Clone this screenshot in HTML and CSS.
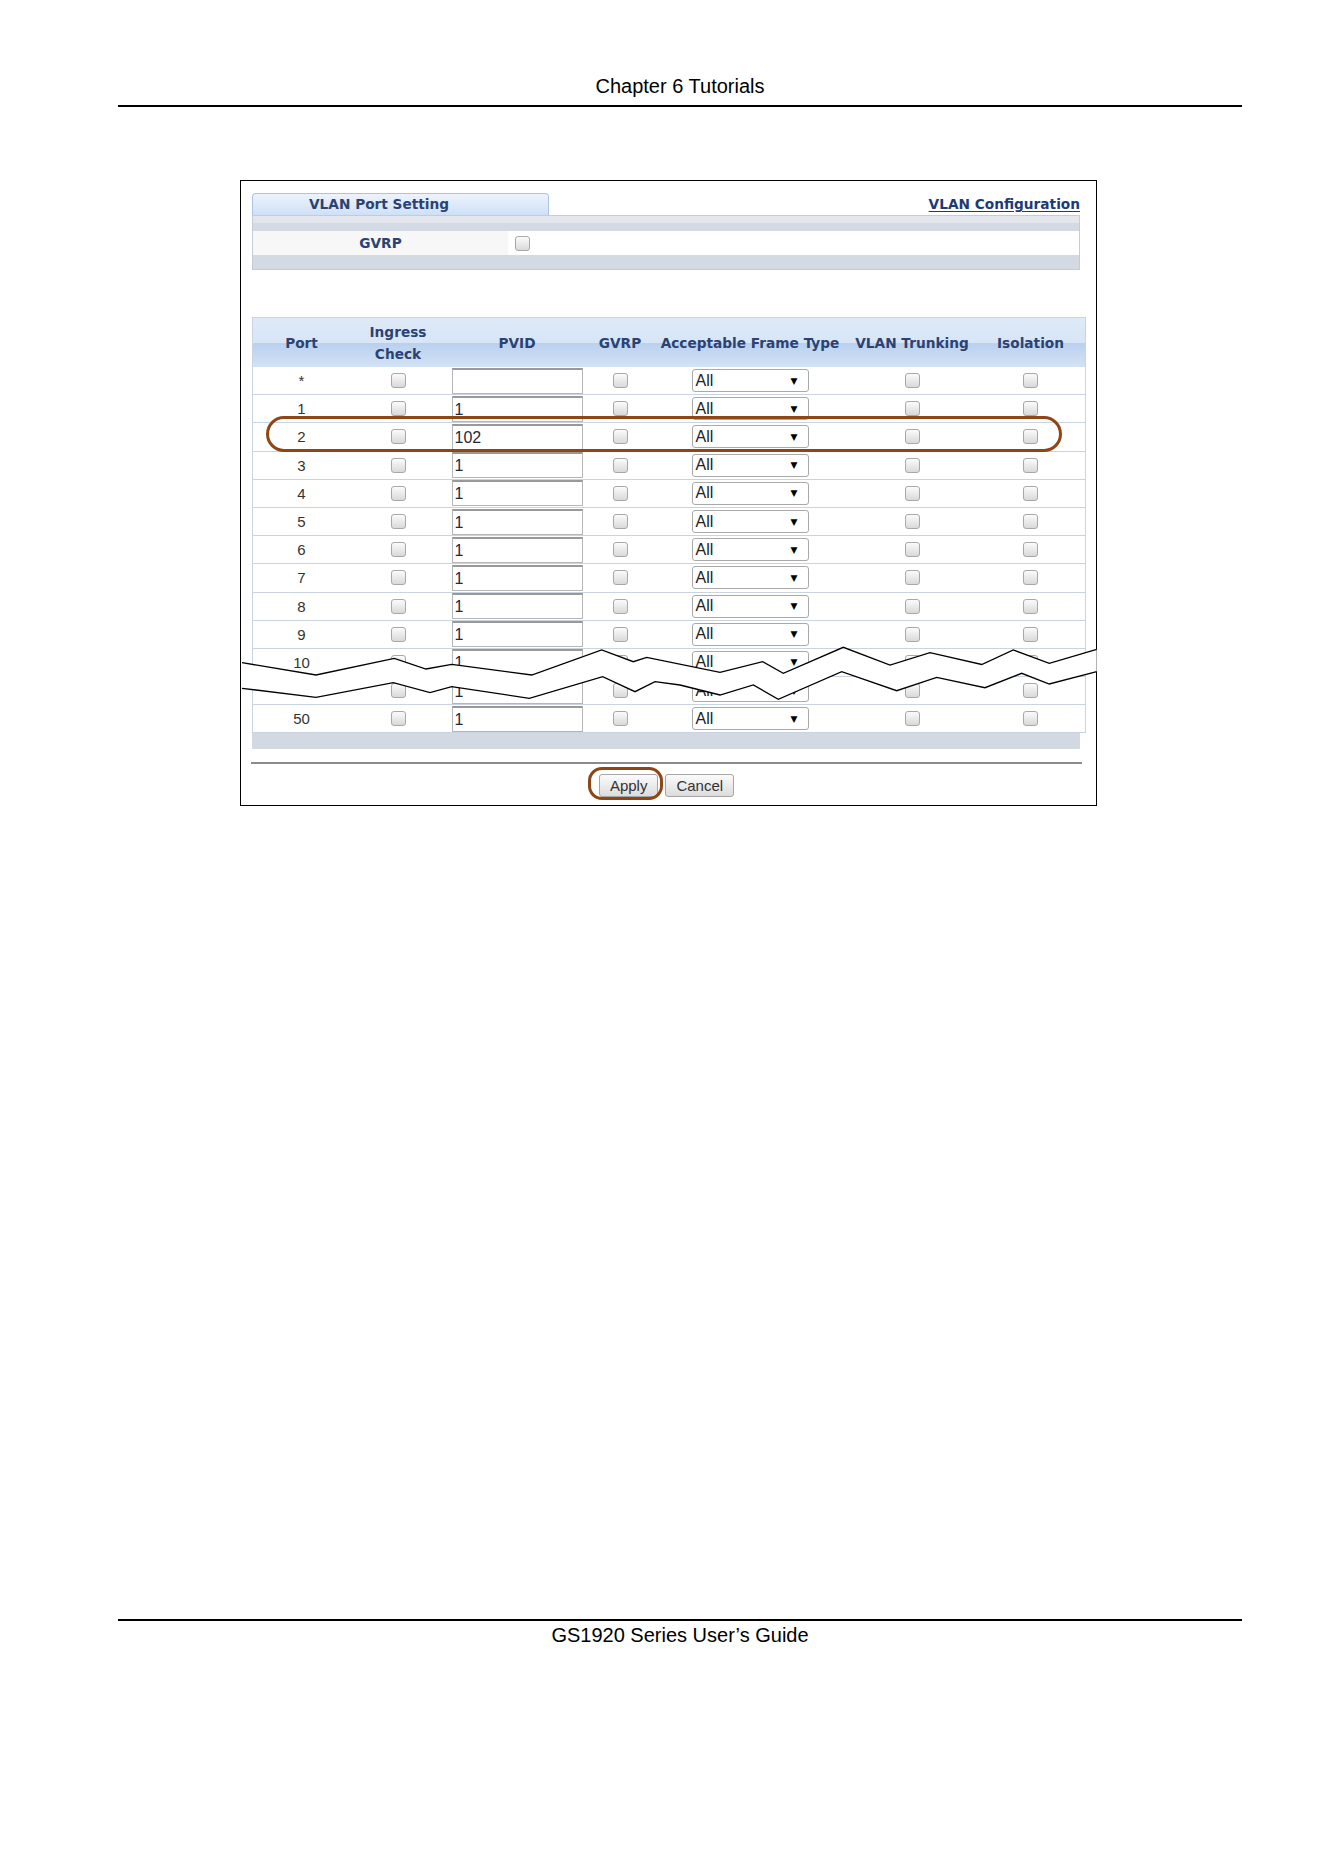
FILE: index.html
```html
<!DOCTYPE html>
<html>
  <head>
    <meta name="viewport" content="width=device-width, initial-scale=1">
    <link rel="stylesheet" href="styles.css">
  </head>
  <body>
    <div class="page">
      <div class="running-head">Chapter 6 Tutorials</div>

      <div class="shot">
        <div class="tabs">
          <div class="tab">VLAN Port Setting</div>
          <a class="link" href="#">VLAN Configuration</a>
        </div>

        <div class="global">
          <div class="global-row">
            <div class="global-label">GVRP</div>
            <div class="global-value"><input type="checkbox" class="cb"></div>
          </div>
        </div>

        <div class="ports">
          <div class="ports-head">
            <div>Port</div>
            <div>Ingress<br>Check</div>
            <div>PVID</div>
            <div>GVRP</div>
            <div>Acceptable Frame Type</div>
            <div>VLAN Trunking</div>
            <div>Isolation</div>
          </div>
          <div class="row"><div class="port">*</div><input type="checkbox" class="cb"><input class="pvid" value=""><input type="checkbox" class="cb"><div class="sel"><span>All</span><span class="arr">&#9660;</span></div><input type="checkbox" class="cb"><input type="checkbox" class="cb"></div>
          <div class="row"><div class="port">1</div><input type="checkbox" class="cb"><input class="pvid" value="1"><input type="checkbox" class="cb"><div class="sel"><span>All</span><span class="arr">&#9660;</span></div><input type="checkbox" class="cb"><input type="checkbox" class="cb"></div>
          <div class="row"><div class="port">2</div><input type="checkbox" class="cb"><input class="pvid" value="102"><input type="checkbox" class="cb"><div class="sel"><span>All</span><span class="arr">&#9660;</span></div><input type="checkbox" class="cb"><input type="checkbox" class="cb"></div>
          <div class="row"><div class="port">3</div><input type="checkbox" class="cb"><input class="pvid" value="1"><input type="checkbox" class="cb"><div class="sel"><span>All</span><span class="arr">&#9660;</span></div><input type="checkbox" class="cb"><input type="checkbox" class="cb"></div>
          <div class="row"><div class="port">4</div><input type="checkbox" class="cb"><input class="pvid" value="1"><input type="checkbox" class="cb"><div class="sel"><span>All</span><span class="arr">&#9660;</span></div><input type="checkbox" class="cb"><input type="checkbox" class="cb"></div>
          <div class="row"><div class="port">5</div><input type="checkbox" class="cb"><input class="pvid" value="1"><input type="checkbox" class="cb"><div class="sel"><span>All</span><span class="arr">&#9660;</span></div><input type="checkbox" class="cb"><input type="checkbox" class="cb"></div>
          <div class="row"><div class="port">6</div><input type="checkbox" class="cb"><input class="pvid" value="1"><input type="checkbox" class="cb"><div class="sel"><span>All</span><span class="arr">&#9660;</span></div><input type="checkbox" class="cb"><input type="checkbox" class="cb"></div>
          <div class="row"><div class="port">7</div><input type="checkbox" class="cb"><input class="pvid" value="1"><input type="checkbox" class="cb"><div class="sel"><span>All</span><span class="arr">&#9660;</span></div><input type="checkbox" class="cb"><input type="checkbox" class="cb"></div>
          <div class="row"><div class="port">8</div><input type="checkbox" class="cb"><input class="pvid" value="1"><input type="checkbox" class="cb"><div class="sel"><span>All</span><span class="arr">&#9660;</span></div><input type="checkbox" class="cb"><input type="checkbox" class="cb"></div>
          <div class="row"><div class="port">9</div><input type="checkbox" class="cb"><input class="pvid" value="1"><input type="checkbox" class="cb"><div class="sel"><span>All</span><span class="arr">&#9660;</span></div><input type="checkbox" class="cb"><input type="checkbox" class="cb"></div>
          <div class="row"><div class="port">10</div><input type="checkbox" class="cb"><input class="pvid" value="1"><input type="checkbox" class="cb"><div class="sel"><span>All</span><span class="arr">&#9660;</span></div><input type="checkbox" class="cb"><input type="checkbox" class="cb"></div>
          <div class="row"><div class="port">49</div><input type="checkbox" class="cb"><input class="pvid" value="1"><input type="checkbox" class="cb"><div class="sel"><span>All</span><span class="arr">&#9660;</span></div><input type="checkbox" class="cb"><input type="checkbox" class="cb"></div>
          <div class="row"><div class="port">50</div><input type="checkbox" class="cb"><input class="pvid" value="1"><input type="checkbox" class="cb"><div class="sel"><span>All</span><span class="arr">&#9660;</span></div><input type="checkbox" class="cb"><input type="checkbox" class="cb"></div>
        </div>
        <div class="ports-foot"></div>

        <div class="actions">
          <button class="btn">Apply</button>
          <button class="btn">Cancel</button>
        </div>

        <!-- torn-page break over rows 10..49 -->
        <svg class="break" width="857" height="626" viewBox="240 180 857 626">
          <polygon fill="#fff" points="242,662.7 316,675 394.3,658.3 426,669 451.7,664.3 531.7,675 601.7,650 633.3,661.7 646.7,657.3 720,672.3 762.7,661.7 783.3,673.3 843.3,647.3 890,665 930,652.7 981.7,664.5 1013.3,650 1049.3,663.3 1096.7,649.3 1096.7,671.7 1049.3,684 1021.7,673.3 985,687.7 936.7,677.3 896.7,690.7 841.7,671.7 778.3,699.3 753.3,685 720,695 680,685 655,681.7 635,691.7 602.7,676.7 529.3,698.3 451.7,686.7 430,692.7 393.3,682.7 316,697.3 242,688.3"/>
          <polyline fill="none" stroke="#000" stroke-width="1.3" points="242,662.7 316,675 394.3,658.3 426,669 451.7,664.3 531.7,675 601.7,650 633.3,661.7 646.7,657.3 720,672.3 762.7,661.7 783.3,673.3 843.3,647.3 890,665 930,652.7 981.7,664.5 1013.3,650 1049.3,663.3 1096.7,649.3"/>
          <polyline fill="none" stroke="#000" stroke-width="1.3" points="242,688.3 316,697.3 393.3,682.7 430,692.7 451.7,686.7 529.3,698.3 602.7,676.7 635,691.7 655,681.7 680,685 720,695 753.3,685 778.3,699.3 841.7,671.7 896.7,690.7 936.7,677.3 985,687.7 1021.7,673.3 1049.3,684 1096.7,671.7"/>
        </svg>

        <div class="mark mark-row"></div>
        <div class="mark mark-apply"></div>
      </div>

      <div class="running-foot">GS1920 Series User’s Guide</div>
    </div>
  </body>
</html>
```

FILE: styles.css
```css
body { margin: 0; background: #fff; font-family: "Liberation Sans", Arial, sans-serif; color: #000; }
.page { width: 1124px; margin-left: 118px; padding-top: 75px; }

.running-head { font-size: 20px; line-height: 23px; text-align: center; padding-bottom: 7px; border-bottom: 2px solid #000; }
.running-foot { margin-top: 813px; font-size: 20px; line-height: 23px; text-align: center; padding-top: 3px; border-top: 2px solid #000; }

.shot {
  position: relative;
  box-sizing: border-box;
  width: 857px;
  margin: 73px 0 0 122px;
  padding: 12px 10px 8px 11px;
  border: 1px solid #000;
  background: #fff;
}

.tabs, .ports-head, .global-label, .link {
  font-family: "DejaVu Sans", Verdana, sans-serif;
  font-weight: bold;
  font-size: 13.7px;
}
.tabs { display: flex; justify-content: space-between; align-items: flex-end; width: 828px; height: 22px; }
.tab {
  box-sizing: border-box;
  width: 297px;
  height: 22px;
  padding-left: 56px;
  line-height: 21px;
  color: #2b4273;
  border: 1px solid #a9c4e6;
  border-bottom: none;
  border-radius: 4px 4px 0 0;
  background: linear-gradient(#edf3fc, #cfe0f6);
}
.link { color: #1d3a78; line-height: 21px; text-decoration: underline; text-underline-offset: 2px; }

.global {
  box-sizing: border-box;
  width: 828px;
  height: 55px;
  padding-top: 15px;
  border: 1px solid #c5ccd7;
  background: linear-gradient(#e3e7ed 0, #e3e7ed 7px, #d4dae3 7px);
}
.global-row { display: flex; height: 24px; }
.global-label { width: 255px; line-height: 24px; text-align: center; color: #2b4273; background: #f7f7f7; }
.global-value { flex: 1; display: flex; align-items: center; padding-left: 7px; background: #fff; }

.ports { width: 834px; margin-top: 47px; }
.ports-head, .row {
  display: grid;
  grid-template-columns: 97px 96px 142px 64px 196px 128px 109px;
  box-sizing: border-box;
  border-left: 1px solid #c9d4e2;
  border-right: 1px solid #c9d4e2;
}
.ports-head {
  height: 50px;
  align-items: center;
  text-align: center;
  line-height: 22px;
  color: #2b4273;
  border-top: 1px solid #c6d5e9;
  background: linear-gradient(#dfeaf8 0, #d7e5f6 50%, #b9d0ee 51%, #d4e3f5 100%);
}
.row {
  height: 28.2px;
  align-items: center;
  justify-items: center;
  border-bottom: 1px solid #cad4e1;
  background: #fff;
}
.port { font-size: 15px; color: #333; }

.cb {
  -webkit-appearance: none;
  appearance: none;
  box-sizing: border-box;
  width: 15px;
  height: 15px;
  margin: 0;
  border: 1px solid #a8a8a8;
  border-radius: 3px;
  background: linear-gradient(#fbfbfb, #d9d9d9);
}
.pvid {
  box-sizing: border-box;
  width: 131px;
  height: 26px;
  margin: 0;
  padding: 1px 2px 0;
  font-family: "Liberation Sans", Arial, sans-serif;
  font-size: 16px;
  color: #1f2a3c;
  border: 1px solid #b6b6b6;
  border-top: 2px solid #999;
  border-radius: 0;
  background: #fff;
}
.sel {
  box-sizing: border-box;
  display: flex;
  justify-content: space-between;
  align-items: center;
  width: 117px;
  height: 23px;
  padding: 0 10px 0 3px;
  font-size: 16px;
  color: #222;
  border: 1px solid #a9a9a9;
  border-radius: 3px;
  background: #fff;
}
.arr { font-family: "DejaVu Sans", sans-serif; font-size: 9px; color: #000; }

.ports-foot { width: 828px; height: 16px; background: #d3d9e3; }

.actions {
  display: flex;
  justify-content: center;
  gap: 7px;
  width: 831px;
  margin: 13px 0 0 -1px;
  padding-top: 10px;
  border-top: 2px solid #8c8c8c;
}
.btn {
  height: 23px;
  padding: 0 10px;
  font-family: "Liberation Sans", Arial, sans-serif;
  font-size: 15px;
  color: #333;
  border: 1px solid #a6a6a6;
  border-radius: 3px;
  background: linear-gradient(#fbfbfb, #dcdcdc);
}

.break { position: absolute; left: -1px; top: -1px; }

.mark { position: absolute; box-sizing: border-box; border: 3px solid #8f4614; }
.mark-row { left: 25px; top: 235px; width: 796px; height: 36px; border-radius: 18px; }
.mark-apply { left: 347px; top: 586px; width: 75px; height: 33px; border-radius: 14px; }
```
